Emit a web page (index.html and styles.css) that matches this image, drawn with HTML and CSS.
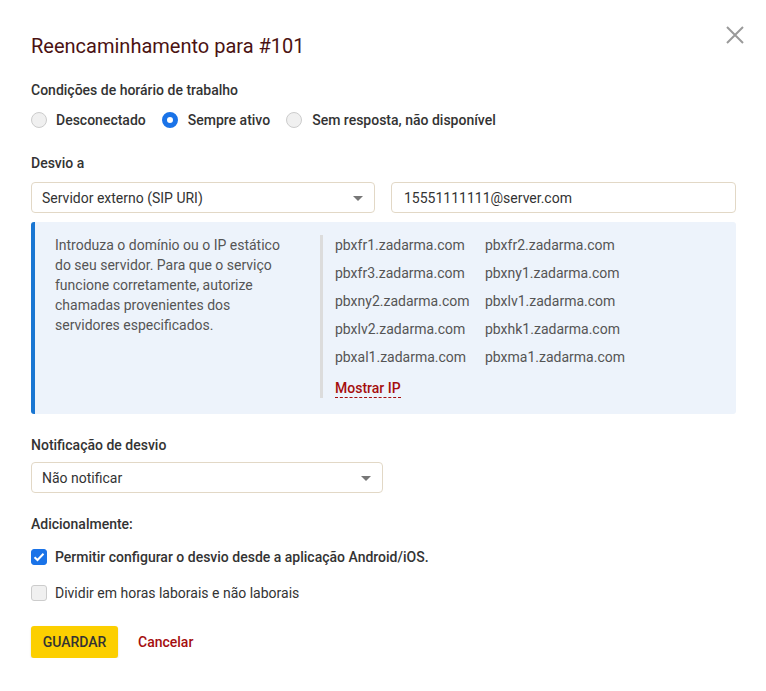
FILE: index.html
```html
<!DOCTYPE html>
<html lang="pt">
<head>
<meta charset="utf-8">
<title>Reencaminhamento para #101</title>
<link rel="stylesheet" href="styles.css">
</head>
<body>
<div class="modal">
  <button class="close" aria-label="Fechar">
    <svg width="20" height="20" viewBox="0 0 20 20"><path d="M2 2L18 18M18 2L2 18" stroke="#9a9a9a" stroke-width="2" fill="none"/></svg>
  </button>
  <h1 class="title">Reencaminhamento para #101</h1>

  <div class="label">Condições de horário de trabalho</div>
  <div class="radios">
    <label class="radio"><span class="circle"></span>Desconectado</label>
    <label class="radio"><span class="circle on"></span>Sempre ativo</label>
    <label class="radio"><span class="circle"></span>Sem resposta, não disponível</label>
  </div>

  <div class="label label-desvio">Desvio a</div>
  <div class="row">
    <div class="select wide">Servidor externo (SIP URI)<span class="caret"></span></div>
    <div class="input">15551111111@server.com</div>
  </div>

  <div class="info">
    <div class="info-text">Introduza o domínio ou o IP estático do seu servidor. Para que o serviço funcione corretamente, autorize chamadas provenientes dos servidores especificados.</div>
    <div class="servers">
      <div class="grid">
        <span>pbxfr1.zadarma.com</span><span>pbxfr2.zadarma.com</span>
        <span>pbxfr3.zadarma.com</span><span>pbxny1.zadarma.com</span>
        <span>pbxny2.zadarma.com</span><span>pbxlv1.zadarma.com</span>
        <span>pbxlv2.zadarma.com</span><span>pbxhk1.zadarma.com</span>
        <span>pbxal1.zadarma.com</span><span>pbxma1.zadarma.com</span>
      </div>
      <a class="show-ip">Mostrar IP</a>
    </div>
  </div>

  <div class="label label-notif">Notificação de desvio</div>
  <div class="select notif">Não notificar<span class="caret"></span></div>

  <div class="label label-add">Adicionalmente:</div>
  <label class="check strong"><span class="box on"><svg width="12" height="10" viewBox="0 0 12 10"><path d="M1.5 5.2L4.5 8L10.5 1.8" stroke="#fff" stroke-width="2" fill="none"/></svg></span>Permitir configurar o desvio desde a aplicação Android/iOS.</label>
  <label class="check"><span class="box"></span>Dividir em horas laborais e não laborais</label>

  <div class="actions">
    <button class="save">GUARDAR</button>
    <a class="cancel">Cancelar</a>
  </div>
</div>
</body>
</html>
```
FILE: styles.css
```css
* { box-sizing: border-box; }
html, body { margin: 0; padding: 0; background: #fff; }
body {
  font-family: Roboto, "Liberation Sans", Arial, sans-serif;
  color: #333;
  font-size: 14px;
}
.modal {
  position: relative;
  padding: 33px 30px 0 31px;
  width: 766px;
}
.close {
  position: absolute;
  top: 25px;
  right: 21px;
  background: none;
  border: 0;
  padding: 0;
  width: 20px;
  height: 20px;
  cursor: pointer;
}
.close svg { display: block; }
.title {
  margin: 0;
  font-size: 20px;
  font-weight: 400;
  color: #4b1212;
  line-height: 26px;
}
.label {
  font-weight: 500;
  color: #333;
  line-height: 20px;
  margin-top: 21px;
}
.radios {
  display: flex;
  align-items: center;
  margin-top: 10px;
}
.radio {
  display: flex;
  align-items: center;
  font-weight: 500;
  color: #333;
  line-height: 20px;
  margin-right: 16px;
}
.circle {
  width: 16px;
  height: 16px;
  border-radius: 50%;
  border: 1px solid #ccc;
  background: #f0f0f0;
  margin-right: 10px;
}
.radio:first-child .circle { margin-right: 9px; }
.circle.on {
  border: 5px solid #1a73e8;
  background: #fff;
}
.label-desvio { margin-top: 23px; }
.row {
  display: flex;
  gap: 16px;
  margin-top: 9px;
}
.select, .input {
  height: 31px;
  border: 1px solid #e2d8c6;
  border-radius: 4px;
  padding: 0 10px;
  display: flex;
  align-items: center;
  color: #333;
  position: relative;
}
.wide { width: 344px; }
.input { width: 345px; padding-left: 12px; }
.caret {
  position: absolute;
  right: 11px;
  top: 13px;
  width: 0;
  height: 0;
  border-left: 5px solid transparent;
  border-right: 5px solid transparent;
  border-top: 5px solid #777;
}
.info {
  margin-top: 9px;
  width: 705px;
  background: #edf3fb;
  border-left: 4px solid #1976d2;
  border-radius: 3px;
  display: flex;
  padding: 13px 0 16px 20px;
  color: #555;
  line-height: 20px;
}
.info-text {
  width: 236px;
  margin-right: 29px;
}
.servers {
  border-left: 3px solid #dcdcdc;
  padding-left: 12px;
}
.grid {
  display: grid;
  grid-template-columns: 150px auto;
  row-gap: 8px;
}
.grid span { line-height: 20px; }
.show-ip {
  display: inline-block;
  margin-top: 12px;
  color: #a50e0e;
  font-weight: 500;
  line-height: 18px;
  border-bottom: 1px dashed #a50e0e;
  cursor: pointer;
}
.label-notif { margin-top: 21px; }
.notif {
  width: 352px;
  margin-top: 7px;
}
.label-add { margin-top: 21px; }
.check {
  display: flex;
  align-items: center;
  line-height: 20px;
  color: #333;
  margin-top: 13px;
}
.check.strong { font-weight: 500; }
.check + .check { margin-top: 16px; }
.box {
  width: 16px;
  height: 16px;
  border-radius: 3px;
  border: 1px solid #ccc;
  background: #f0f0f0;
  margin-right: 8px;
  display: flex;
  align-items: center;
  justify-content: center;
}
.box.on {
  background: #1a73e8;
  border-color: #1a73e8;
}
.box svg { display: block; }
.actions {
  display: flex;
  align-items: center;
  margin-top: 23px;
}
.save {
  height: 32px;
  width: 87px;
  background: #fccf00;
  border: 0;
  border-radius: 3px;
  font-family: inherit;
  font-size: 14px;
  font-weight: 500;
  color: #333;
  box-shadow: 0 1px 2px rgba(0,0,0,0.15);
  cursor: pointer;
}
.cancel {
  margin-left: 20px;
  color: #a50e0e;
  font-weight: 500;
  cursor: pointer;
}
```
